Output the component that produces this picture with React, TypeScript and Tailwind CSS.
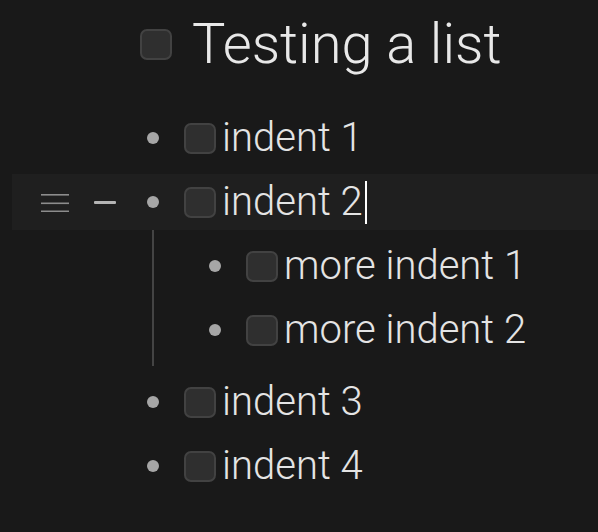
import React from 'react';

type Item = {
  text: string;
  active?: boolean;
  children?: Item[];
};

const ITEMS: Item[] = [
  { text: 'indent 1' },
  {
    text: 'indent 2',
    active: true,
    children: [{ text: 'more indent 1' }, { text: 'more indent 2' }],
  },
  { text: 'indent 3' },
  { text: 'indent 4' },
];

const Checkbox = () => (
  <span className="block w-8 h-[31px] shrink-0 rounded-[7px] border-2 border-[#424242] bg-[#2f2f2f]" />
);

const Handles = ({ show }: { show: boolean }) => (
  <div className={`flex items-center ${show ? '' : 'invisible'}`}>
    {/* drag handle */}
    <svg width="28" height="20" viewBox="0 0 28 20" className="shrink-0">
      <rect x="0" y="2" width="28" height="1.6" fill="#8c8c8c" />
      <rect x="0" y="10.5" width="28" height="1.6" fill="#8c8c8c" />
      <rect x="0" y="18.5" width="28" height="1.6" fill="#8c8c8c" />
    </svg>
    {/* collapse */}
    <span className="ml-[25px] block w-[22px] h-[3px] bg-[#b4b4b4] rounded-[1px]" />
  </div>
);

const Row = ({ item, nested }: { item: Item; nested?: boolean }) => (
  <div
    className={`mt-2 h-14 flex items-center ${
      nested ? 'pl-[55px]' : 'ml-[12px] pl-[29px]'
    } ${item.active ? 'bg-[#1f1f1f]' : ''}`}
  >
    {!nested && <Handles show={!!item.active} />}
    <span className={`block w-3 h-3 rounded-full bg-[#a6a6a6] shrink-0 ${nested ? '' : 'ml-[31px]'}`} />
    <span className="ml-[25px]">
      <Checkbox />
    </span>
    <span className="ml-[6px] text-[40px] leading-none text-[#e4e4e4] whitespace-nowrap">
      {item.text}
    </span>
    {item.active && <span className="ml-[2px] block w-[2px] h-[43px] bg-white" />}
  </div>
);

export default function App() {
  return (
    <div className="min-h-screen w-full flex flex-col bg-[#191919] pt-[14px] font-['Roboto',sans-serif] font-light">
      <div className="flex items-center h-[60px] pl-[140px]">
        <span className="block w-8 h-[31px] shrink-0 rounded-[7px] border-2 border-[#424242] bg-[#2f2f2f]" />
        <h1 className="ml-5 text-[56px] leading-none text-[#e8e8e8] whitespace-nowrap">Testing a list</h1>
      </div>

      <div className="mt-[28px] flex flex-col">
        {ITEMS.map((item) => (
          <div key={item.text} className="flex flex-col">
            <Row item={item} />
            {item.children && (
              <div className="ml-[152px] flex flex-col border-l-2 border-[#444444] pb-2">
                {item.children.map((c) => (
                  <Row key={c.text} item={c} nested />
                ))}
              </div>
            )}
          </div>
        ))}
      </div>
    </div>
  );
}
